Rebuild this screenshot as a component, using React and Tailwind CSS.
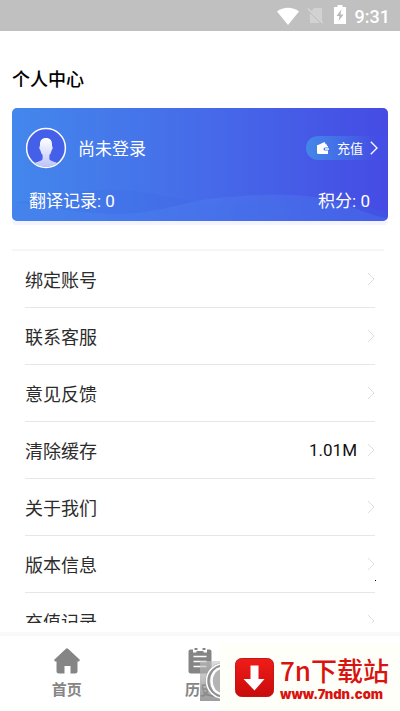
import React from 'react';

const menuItems = [
  { label: '绑定账号' },
  { label: '联系客服' },
  { label: '意见反馈' },
  { label: '清除缓存', value: '1.01M' },
  { label: '关于我们' },
  { label: '版本信息', dot: true },
  { label: '充值记录' },
];

const Chevron = ({ className }) => (
  <svg viewBox="0 0 8 14" fill="none" stroke="currentColor" className={className} aria-hidden="true">
    <path d="M.8.8 7 7 .8 13.2" />
  </svg>
);

const StatusBar = () => (
  <header className="h-[31px] shrink-0 bg-[#c0c0c0] text-white flex items-center justify-end pr-[10px]">
    <svg viewBox="0 0 22 18" className="w-[22px] h-[18px]" fill="currentColor" aria-hidden="true">
      <path d="M0 4.4C6.2-.4 15.8-.4 22 4.4L11 18Z" />
    </svg>
    <svg viewBox="0 0 17 17" className="w-[17px] h-[17px] ml-2" aria-hidden="true">
      <path d="M7 1h8v13.5L4.6 4Z" fill="#d2d2d2" />
      <path d="M3 6v10h10Z" fill="#d2d2d2" />
      <path d="M.8 1.5 15.6 16" stroke="#d8d8d8" strokeWidth="1.3" />
    </svg>
    <svg viewBox="0 0 12 19" className="w-3 h-[19px] ml-[10px] mb-[2px]" aria-hidden="true">
      <path d="M3.5 0h5v2H12v17H0V2h3.5Z" fill="currentColor" />
      <path d="M7.3 4.5 2.5 11h3l-.9 5L9.5 9.500h-3Z" fill="#b8b8b8" />
    </svg>
    <span className="ml-[9px] pt-[2px] text-[18px] leading-6 font-medium">9:31</span>
  </header>
);

const Avatar = () => (
  <svg viewBox="0 0 42 42" className="w-[42px] h-[42px]" aria-hidden="true">
    <defs>
      <linearGradient id="person" gradientUnits="userSpaceOnUse" x1="0" y1="11" x2="0" y2="40">
        <stop offset="0" stopColor="#fff" />
        <stop offset="1" stopColor="#bcc3f8" />
      </linearGradient>
      <clipPath id="face"><circle cx="21" cy="21" r="19" /></clipPath>
    </defs>
    <circle cx="21" cy="21" r="19.4" fill="#4560e8" stroke="#fff" strokeWidth="1.5" />
    <path
      clipPath="url(#face)"
      fill="url(#person)"
      d="M21 11c4.600 0 6.400 3 6 8 .9.200.9 3-.4 4.200-.4 2.300-1.300 3.800-2.200 4.800v4c0 2.200 8 3 10.600 5.500V42H7v-4.500c2.600-2.500 10.600-3.300 10.600-5.500v-4c-.9-1-1.800-2.500-2.200-4.800-1.300-1.200-1.300-4-.4-4.200-.4-5 1.400-8 6-8Z"
    />
  </svg>
);

const ProfileCard = () => (
  <section className="relative mx-3 h-[113px] rounded-[5px] overflow-hidden text-white bg-linear-to-r from-[#4387ec] via-[#466be9] to-[#454be4]">
    <svg viewBox="0 0 376 113" preserveAspectRatio="none" className="absolute inset-0 w-full h-full" aria-hidden="true">
      <path d="M0 94C30 94 50 84 90 82c50-2 75 12 112 14 35 2 100-6 130-2 20 3 34 8 44 11v8H0Z" fill="#3d68e4" opacity=".22" />
      <path d="M0 94C40 99 75 107 112 106c40-2 70-16 105-17 60-6 95-1 120 9 15 6 25 9 39 13v2H0Z" fill="#5590f4" opacity=".22" />
    </svg>
    <div className="relative h-full flex flex-col justify-between pt-[19px] pb-[8px]">
      <div className="flex items-center pl-[13px]">
        <Avatar />
        <span className="ml-[11px] pt-[2px] text-[17px] leading-6">尚未登录</span>
        <button className="ml-auto h-6 w-[82px] pl-[11px] pr-[10px] rounded-l-full flex items-center bg-linear-to-r from-[#4387e8] to-[#454ee4] to-85%">
          <svg viewBox="0 0 12 12" className="w-3 h-3" aria-hidden="true">
            <path d="M1 3 7.500 0l1.500 2.500H10V4h1v1.500H8a1.500 1.500 0 0 0 0 3h3V12H.8L0 11V3Z" fill="#fff" />
            <path d="M8 6.300h4v1.500H8Z" fill="#fff" />
          </svg>
          <span className="ml-2 pt-[2px] text-[13px] leading-5">充值</span>
          <Chevron className="ml-auto w-2 h-[14px] stroke-[1.3]" />
        </button>
      </div>
      <div className="flex justify-between pl-[17px] pr-[18px] text-[17px] leading-6">
        <span>翻译记录: 0</span>
        <span>积分: 0</span>
      </div>
    </div>
  </section>
);

const MenuRow = ({ label, value, dot }) => (
  <li className="relative px-[13px]">
    <button className="w-full h-[57px] flex items-center text-left border-b border-[#e6e6e6]">
      <span className="pt-1 text-[18px] leading-6 text-[#2c2c2c]">{label}</span>
      <span className="ml-auto text-[17px] leading-6 text-[#111]">{value}</span>
      <Chevron className="ml-[10px] w-2 h-[14px] text-[#dedede]" />
    </button>
    {dot && <span className="absolute right-3 bottom-3 w-px h-px bg-black" />}
  </li>
);

const DownloadBanner = () => (
  <aside className="absolute right-0 bottom-0 h-[67px] w-[200px] flex">
    <div className="mt-[17px] w-5 h-10 shrink-0 overflow-hidden bg-linear-to-b from-[#c8c8c8]/60 to-[#858585]/80">
      <svg viewBox="0 0 20 40" className="w-5 h-10" fill="none" aria-hidden="true">
        <circle cx="24" cy="20" r="16.500" fill="#b4b4b4" stroke="#909090" strokeWidth="4" />
        <circle cx="24" cy="20" r="17.500" stroke="#fff" strokeWidth="1.500" />
        <path d="M22 7c-14 1-14 25 0 26" stroke="#fff" strokeWidth="2.500" />
      </svg>
    </div>
    <div className="flex-1 flex items-center bg-[#fffffa] pl-[15px]">
      <svg viewBox="0 0 39 39" className="w-[39px] h-[39px] shrink-0" aria-hidden="true">
        <defs>
          <linearGradient id="tile" x1="0" y1="0" x2="0" y2="1">
            <stop offset="0" stopColor="#f01c18" />
            <stop offset="1" stopColor="#c80c0c" />
          </linearGradient>
        </defs>
        <rect x=".5" y=".5" width="38" height="38" rx="6" fill="url(#tile)" stroke="#c01818" />
        <path d="M15.500 7.500h8V21h6L19.500 32.500 8.500 21h7Z" fill="#fff" />
      </svg>
      <div className="ml-[6px] text-[#d9130f] whitespace-nowrap">
        <p className="font-['Noto_Sans_CJK_SC',sans-serif] font-medium text-[26px] leading-8">7n下载站</p>
        <a href="#download" className="block font-['Inter',sans-serif] font-black text-[13px] leading-4">www.7ndn.com</a>
      </div>
    </div>
  </aside>
);

const TabBar = () => (
  <nav className="relative h-[79px] shrink-0 border-t-4 border-[#f9f9f9] grid grid-cols-3 text-[#858585] text-[15px] leading-5 font-bold">
    <a href="#home" className="flex flex-col items-center pt-3">
      <svg viewBox="0 0 26 26" className="w-[26px] h-[26px]" fill="currentColor" aria-hidden="true">
        <path d="M11.700.9a2 2 0 0 1 2.600 0L25.300 11.200c.9.900.4 2.200-.8 2.200H23.500V23a2.500 2.500 0 0 1-2.500 2.500h-4.500V18h-6v7.500H5A2.500 2.500 0 0 1 2.500 23v-9.600h-1c-1.200 0-1.700-1.300-.8-2.200Z" />
      </svg>
      <span className="mt-[6px]">首页</span>
    </a>
    <a href="#history" className="flex flex-col items-center pt-3">
      <svg viewBox="0 0 26 26" className="w-[26px] h-[26px]" aria-hidden="true">
        <path d="M3.500 1.500H6V4.500h3.500V3h7v1.500H20v-3h2.500a2 2 0 0 1 2 2V23a2.500 2.500 0 0 1-2.500 2.500H4A2.500 2.500 0 0 1 1.500 23V3.500a2 2 0 0 1 2-2Z" fill="currentColor" />
        <path d="M7.500 1h3M15.500 1h3" stroke="currentColor" strokeWidth="2" />
        <path d="M6.500 8.500h13M6.500 13.500h13M6.500 18.500h13" stroke="#fff" strokeWidth="1.600" />
      </svg>
      <span className="mt-[6px]">历史</span>
    </a>
    <DownloadBanner />
  </nav>
);

const App = () => (
  <div className="h-screen flex flex-col overflow-hidden bg-white font-[Roboto,'Noto_Sans_CJK_SC',sans-serif]">
    <StatusBar />
    <h1 className="px-3 pt-[37px] pb-4 text-[18px] leading-6 font-medium text-black">个人中心</h1>
    <ProfileCard />
    <div className="mx-3 h-1 shrink-0 rounded-b bg-[#f3f4fd]" />
    <main className="flex-1 min-h-0 mt-6 mb-[9px] overflow-hidden px-3">
      <div className="h-[2px] mr-1 bg-[#f6f6f6]" />
      <ul>
        {menuItems.map((item) => (
          <MenuRow key={item.label} {...item} />
        ))}
      </ul>
    </main>
    <TabBar />
  </div>
);

export default App;
